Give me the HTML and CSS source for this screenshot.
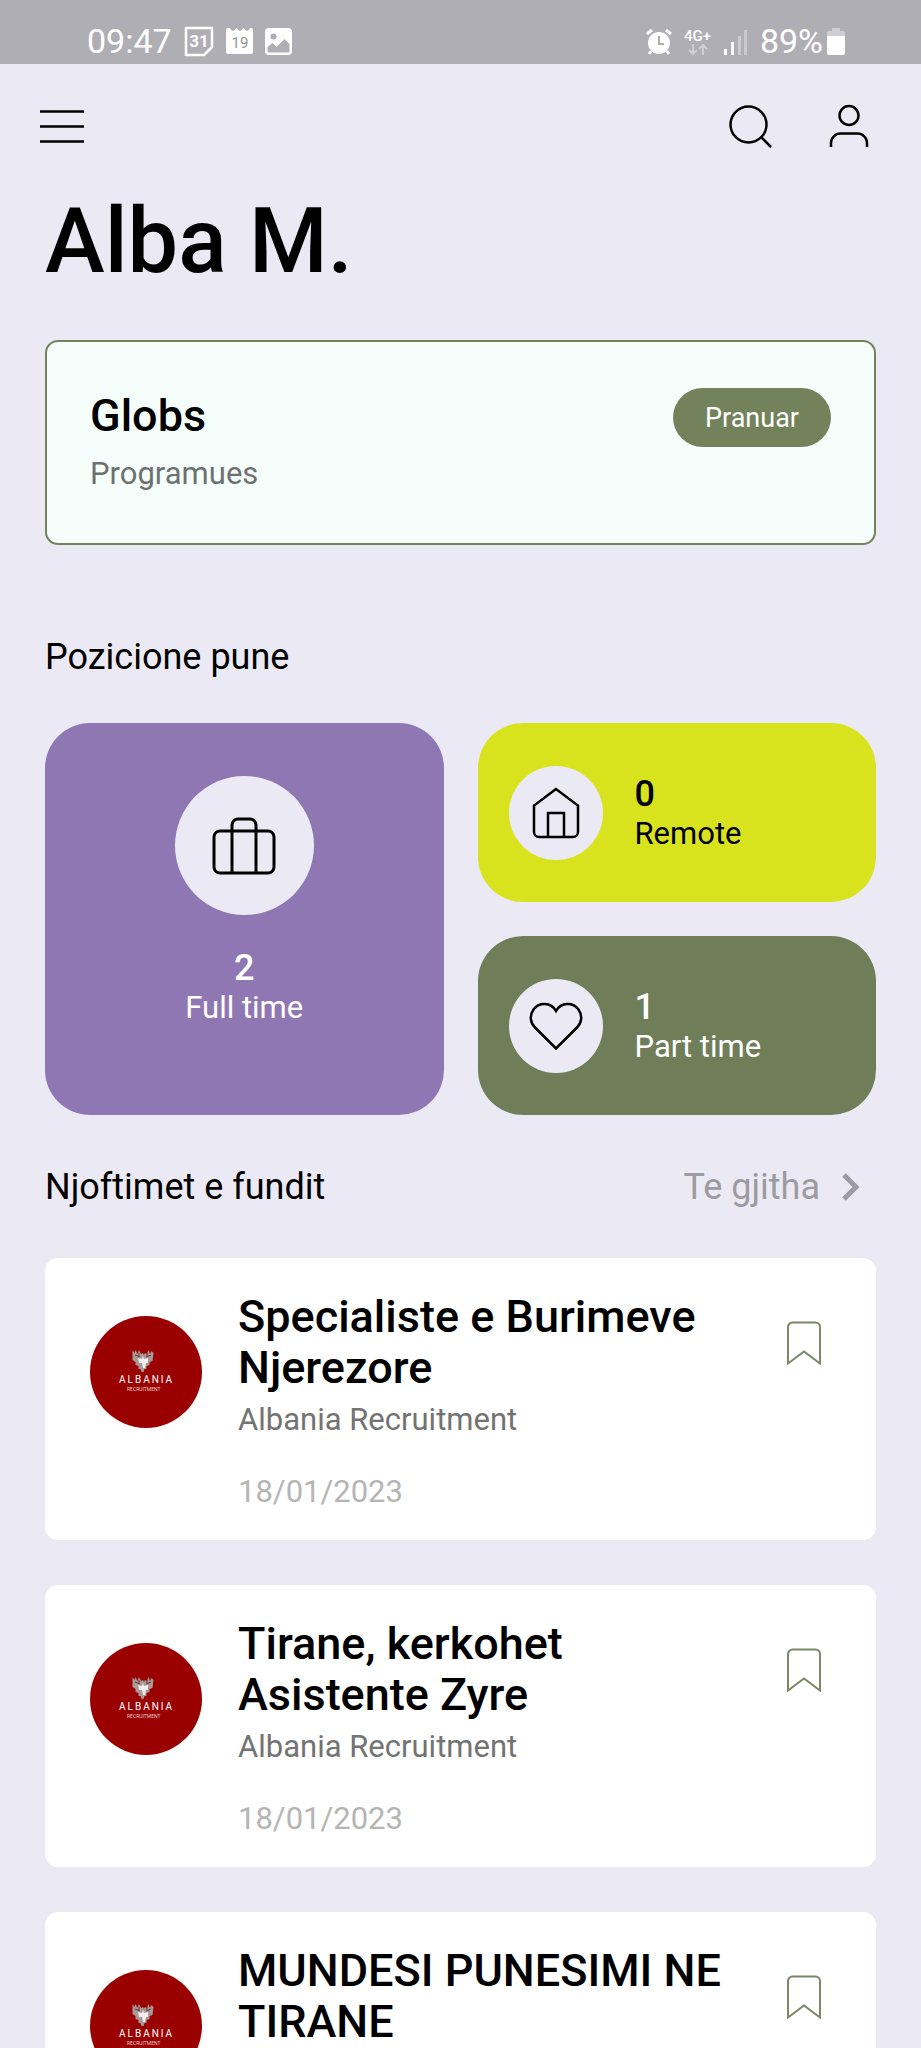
FILE: index.html
```html
<!DOCTYPE html>
<html lang="sq">
  <head>
    <meta charset="UTF-8" />
    <meta name="viewport" content="width=device-width, initial-scale=1" />
    <title>Njoftime pune</title>
    <link rel="stylesheet" href="styles.css">
  </head>
  <body>
    <!-- shared icons -->
    <svg class="sprite" aria-hidden="true">
      <symbol id="bookmark" viewBox="0 0 36 44">
        <path d="M2 42.500V6a4.500 4.500 0 0 1 4.500-4.500h23A4.500 4.500 0 0 1 34 6v36.500L18 30.500z" />
      </symbol>
      <symbol id="eagle" viewBox="0 0 112 112">
        <circle cx="56" cy="56" r="56" fill="#9b0000" />
        <path fill="#a99999" d="M42.500 34l2 3 1-3 2 4 1.500-4 2 4 2-1 1 2 1-2 2 1 1.500-4 1.500 4 1.500-3 2 2-1 8-3 1v3l-3 1v3l-2 0-1 3h-2l-1-3-2 0v-3l-3-1v-3l-3-2z" />
        <path fill="#f4eeee" d="M48 42l4 1 1-3 1 3 4-1 0 5-2 0-1 5h-2l-1-5-3 0z" />
        <path stroke="#6d3030" fill="none" d="M45 39l5 2M61 39l-5 2M49 37v3M57 37v3" />
      </symbol>
    </svg>

    <div class="status-bar">
      <div class="status-group">
        <span class="status-text">09:47</span>
        <svg width="30" height="31" viewBox="0 0 30 31">
          <path d="M2 2h26v19l-8 8H2z" fill="none" stroke="#fff" stroke-width="2.500" stroke-linejoin="round" />
          <text class="cal-bold" x="15" y="21">31</text>
        </svg>
        <svg width="27" height="31" viewBox="0 0 27 31">
          <path d="M0 4q0-2 2-2h2q1 3 3 3t3-3h1q1 3 3 3t3-3h1q1 3 3 3t3-3h1q2 0 2 2v22q0 2-2 2H2q-2 0-2-2z" fill="#fff" />
          <text class="cal-day" x="14" y="22">19</text>
        </svg>
        <svg width="27" height="31" viewBox="0 0 27 31">
          <path fill="#fff" fill-rule="evenodd" d="M4 2h19q4 0 4 4v19q0 4-4 4H4q-4 0-4-4V6q0-4 4-4zM8.500 7.500a3 3 0 1 0 0 6 3 3 0 0 0 0-6zM2.500 21v4q0 1.500 1.500 1.500h19q1.500 0 1.500-1.500v-7l-5-5-8 8-4-4z" />
        </svg>
      </div>
      <div class="status-group">
        <svg width="26" height="31" viewBox="0 0 26 31">
          <circle cx="13" cy="17" r="11" fill="#fff" />
          <path d="M1 8l5-4M25 8l-5-4M5 25l-2 3M21 25l2 3" stroke="#fff" stroke-width="3" />
          <path d="M13 10v8h5" fill="none" stroke="#afaeb5" stroke-width="2" />
        </svg>
        <svg width="28" height="31" viewBox="0 0 28 31">
          <text class="network" x="0" y="15">4G+</text>
          <path d="M9 18v10M5 24l4 4 4-4M19 29V19M15 23l4-4 4 4" fill="none" stroke="#cfced4" stroke-width="2" />
        </svg>
        <svg width="24" height="31" viewBox="0 0 24 31">
          <path d="M0 23h3v6H0zM7 16h3v13H7z" fill="#fff" />
          <path d="M14 10h3v19h-3zM20 4h3v25h-3z" fill="#cbcad0" />
        </svg>
        <span class="status-text battery">89%
          <svg width="18" height="31" viewBox="0 0 18 31">
            <path d="M5 2h8v3h3q2 0 2 2v4H0V7q0-2 2-2h3z" fill="#cfced4" />
            <path d="M0 10h18v17q0 2-2 2H2q-2 0-2-2z" fill="#fff" />
          </svg>
        </span>
      </div>
    </div>

    <header class="top-bar">
      <button class="icon-btn" aria-label="Menu">
        <svg width="44" height="44" viewBox="0 0 44 44">
          <path d="M0 7.500h44M0 22.500h44M0 37.500h44" />
        </svg>
      </button>
      <div class="top-actions">
        <button class="icon-btn" aria-label="Kerko">
          <svg width="44" height="44" viewBox="0 0 44 44">
            <circle cx="19.500" cy="20.500" r="18" />
            <path d="M32.500 33.500l9.500 9.500" />
          </svg>
        </button>
        <button class="icon-btn" aria-label="Profili">
          <svg width="44" height="44" viewBox="0 0 44 44">
            <circle cx="22" cy="11.500" r="9.500" />
            <path d="M4 43v-4a9.500 9.500 0 0 1 9.500-9.500h17A9.500 9.500 0 0 1 40 39v4" />
          </svg>
        </button>
      </div>
    </header>

    <main class="content">
      <h1 class="name">Alba M.</h1>

      <section class="application">
        <div>
          <h2 class="company">Globs</h2>
          <p class="role">Programues</p>
        </div>
        <button class="pill">Pranuar</button>
      </section>

      <h2 class="section-title">Pozicione pune</h2>
      <div class="positions">
        <a href="#" class="position full-time">
          <span class="circle">
            <svg width="64" height="58" viewBox="0 0 64 58">
              <rect x="2" y="14" width="60" height="42" rx="6" />
              <path d="M20 56V8a6 6 0 0 1 6-6h12a6 6 0 0 1 6 6v48" />
            </svg>
          </span>
          <span class="position-text">
            <span class="count">2</span>
            <span class="kind">Full time</span>
          </span>
        </a>
        <a href="#" class="position remote">
          <span class="circle">
            <svg width="48" height="52" viewBox="0 0 48 52">
              <path d="M24 2L2 18.500V45a5 5 0 0 0 5 5h34a5 5 0 0 0 5-5V18.500z" />
              <path d="M16 50V26h16v24" />
            </svg>
          </span>
          <span class="position-text">
            <span class="count">0</span>
            <span class="kind">Remote</span>
          </span>
        </a>
        <a href="#" class="position part-time">
          <span class="circle">
            <svg width="54" height="48" viewBox="0 0 54 48">
              <path d="M27 9C22 0 10 0 4.500 7.500 0 14 1.500 21 6 25.500L27 46.500 48 25.500C52.500 21 54 14 49.500 7.500 44 0 32 0 27 9z" />
            </svg>
          </span>
          <span class="position-text">
            <span class="count">1</span>
            <span class="kind">Part time</span>
          </span>
        </a>
      </div>

      <div class="section-head">
        <h2 class="section-title">Njoftimet e fundit</h2>
        <a href="#" class="see-all">Te gjitha
          <svg width="18" height="28" viewBox="0 0 18 28">
            <path d="M2 2l12 12L2 26" />
          </svg>
        </a>
      </div>

      <div class="jobs">
        <article class="job">
          <svg class="job-logo" viewBox="0 0 112 112">
            <use href="#eagle" />
            <text class="logo-name" x="29" y="67">ALBANIA</text>
            <text class="logo-sub" x="37" y="75">RECRUITMENT</text>
          </svg>
          <div class="job-info">
            <h3 class="job-title">Specialiste e Burimeve Njerezore</h3>
            <p class="job-company">Albania Recruitment</p>
            <p class="job-date">18/01/2023</p>
          </div>
          <button class="bookmark" aria-label="Ruaj"><svg><use href="#bookmark" /></svg></button>
        </article>

        <article class="job">
          <svg class="job-logo" viewBox="0 0 112 112">
            <use href="#eagle" />
            <text class="logo-name" x="29" y="67">ALBANIA</text>
            <text class="logo-sub" x="37" y="75">RECRUITMENT</text>
          </svg>
          <div class="job-info">
            <h3 class="job-title">Tirane, kerkohet Asistente Zyre</h3>
            <p class="job-company">Albania Recruitment</p>
            <p class="job-date">18/01/2023</p>
          </div>
          <button class="bookmark" aria-label="Ruaj"><svg><use href="#bookmark" /></svg></button>
        </article>

        <article class="job">
          <svg class="job-logo" viewBox="0 0 112 112">
            <use href="#eagle" />
            <text class="logo-name" x="29" y="67">ALBANIA</text>
            <text class="logo-sub" x="37" y="75">RECRUITMENT</text>
          </svg>
          <div class="job-info">
            <h3 class="job-title">MUNDESI PUNESIMI NE TIRANE</h3>
          </div>
          <button class="bookmark" aria-label="Ruaj"><svg><use href="#bookmark" /></svg></button>
        </article>
      </div>
    </main>
  </body>
</html>
```
FILE: styles.css
```css
* {
  box-sizing: border-box;
}
body {
  margin: 0;
  height: 100vh;
  display: flex;
  flex-direction: column;
  overflow: hidden;
  background: #ebeaf4;
  color: #000;
  font-family: Roboto, "Liberation Sans", sans-serif;
}
h1,
h2,
h3,
p {
  margin: 0;
}
a {
  color: inherit;
  text-decoration: none;
}
button {
  border: none;
  padding: 0;
  background: none;
  font-family: inherit;
  cursor: pointer;
}
svg {
  display: block;
  flex-shrink: 0;
}
.sprite {
  position: absolute;
  width: 0;
  height: 0;
}

/* phone status bar */
.status-bar {
  flex-shrink: 0;
  display: flex;
  justify-content: space-between;
  height: 64px;
  padding: 26px 76px 0 87px;
  background: #afaeb5;
  color: #fff;
}
.status-group {
  display: flex;
  gap: 12px;
  height: 31px;
}
.status-text {
  font-size: 34px;
  line-height: 31px;
}
.battery {
  display: flex;
  gap: 4px;
}
.cal-bold {
  font-size: 17px;
  font-weight: 700;
  fill: #fff;
  text-anchor: middle;
}
.cal-day {
  font-size: 15px;
  fill: #96959c;
  text-anchor: middle;
}
.network {
  font-size: 15px;
  font-weight: 500;
  fill: #fff;
}

.top-bar {
  flex-shrink: 0;
  display: flex;
  justify-content: space-between;
  padding: 40px 50px 41px 40px;
}
.top-actions {
  display: flex;
  gap: 54px;
}
.icon-btn svg {
  overflow: visible;
  fill: none;
  stroke: #000;
  stroke-width: 2.5;
}

.content {
  flex: 1;
  min-height: 0;
  overflow: hidden;
  padding: 0 45px;
}
.name {
  font-size: 90px;
  font-weight: 500;
  line-height: 106px;
}
.application {
  display: flex;
  justify-content: space-between;
  align-items: flex-start;
  margin-top: 45px;
  padding: 46px 43px 51px;
  border: 2px solid #72825b;
  border-radius: 13px;
  background: #f6fefb;
}
.company {
  font-size: 45px;
  font-weight: 500;
  line-height: 56px;
}
.role {
  margin-top: 12px;
  font-size: 31px;
  line-height: 36px;
  color: #6d7270;
}
.pill {
  height: 59px;
  padding: 0 32px;
  border-radius: 30px;
  background: #72825b;
  color: #fff;
  font-size: 27px;
}
.section-title {
  font-size: 36px;
  font-weight: 400;
  line-height: 42px;
}
.application + .section-title {
  margin-top: 91px;
}

.positions {
  display: grid;
  grid-template-columns: 1fr 1fr;
  gap: 34px;
  margin-top: 45px;
}
.position {
  display: flex;
  align-items: center;
  gap: 32px;
  min-height: 179px;
  padding: 0 31px;
  border-radius: 45px;
}
.circle {
  display: flex;
  align-items: center;
  justify-content: center;
  flex-shrink: 0;
  width: 94px;
  height: 94px;
  border-radius: 50%;
  background: #ebeaf4;
}
.circle svg {
  fill: none;
  stroke: #000;
  stroke-width: 2.5;
}
.position-text {
  display: flex;
  flex-direction: column;
}
.count {
  font-size: 36px;
  font-weight: 500;
  line-height: 42px;
}
.kind {
  font-size: 31px;
  line-height: 37px;
}
.full-time {
  grid-row: span 2;
  flex-direction: column;
  padding-top: 53px;
  background: #8f77b3;
  color: #fff;
  text-align: center;
}
.full-time .circle {
  width: 139px;
  height: 139px;
}
.full-time svg {
  stroke-width: 3;
}
.remote {
  background: #d8e31e;
}
.part-time {
  background: #6f7e59;
  color: #fff;
}

.section-head {
  display: flex;
  justify-content: space-between;
  margin: 51px 0 50px;
}
.see-all {
  display: flex;
  align-items: center;
  gap: 22px;
  padding-right: 16px;
  font-size: 36px;
  line-height: 42px;
  color: #9c9ba1;
}
.see-all svg {
  fill: none;
  stroke: #9c9ba1;
  stroke-width: 5;
}

.jobs {
  display: flex;
  flex-direction: column;
  gap: 45px;
}
.job {
  display: flex;
  align-items: flex-start;
  gap: 36px;
  min-height: 282px;
  padding: 33px 45px 30px;
  border-radius: 13px;
  background: #fff;
}
.job-logo {
  width: 112px;
  height: 112px;
  margin-top: 25px;
}
.logo-name {
  font-size: 10px;
  letter-spacing: 2px;
  fill: #fff;
}
.logo-sub {
  font-size: 5px;
  fill: #e6c8c8;
}
.job-info {
  flex: 1;
}
.job-title {
  font-size: 45px;
  font-weight: 500;
  line-height: 51px;
}
.job-company {
  margin-top: 9px;
  font-size: 31px;
  line-height: 36px;
  color: #737373;
}
.job-date {
  margin-top: 36px;
  font-size: 31px;
  line-height: 36px;
  color: #b5b5b5;
}
.bookmark {
  display: flex;
  justify-content: center;
  width: 54px;
  margin-top: 30px;
}
.bookmark svg {
  width: 36px;
  height: 44px;
  fill: none;
  stroke: #7b8964;
  stroke-width: 2;
}
```
